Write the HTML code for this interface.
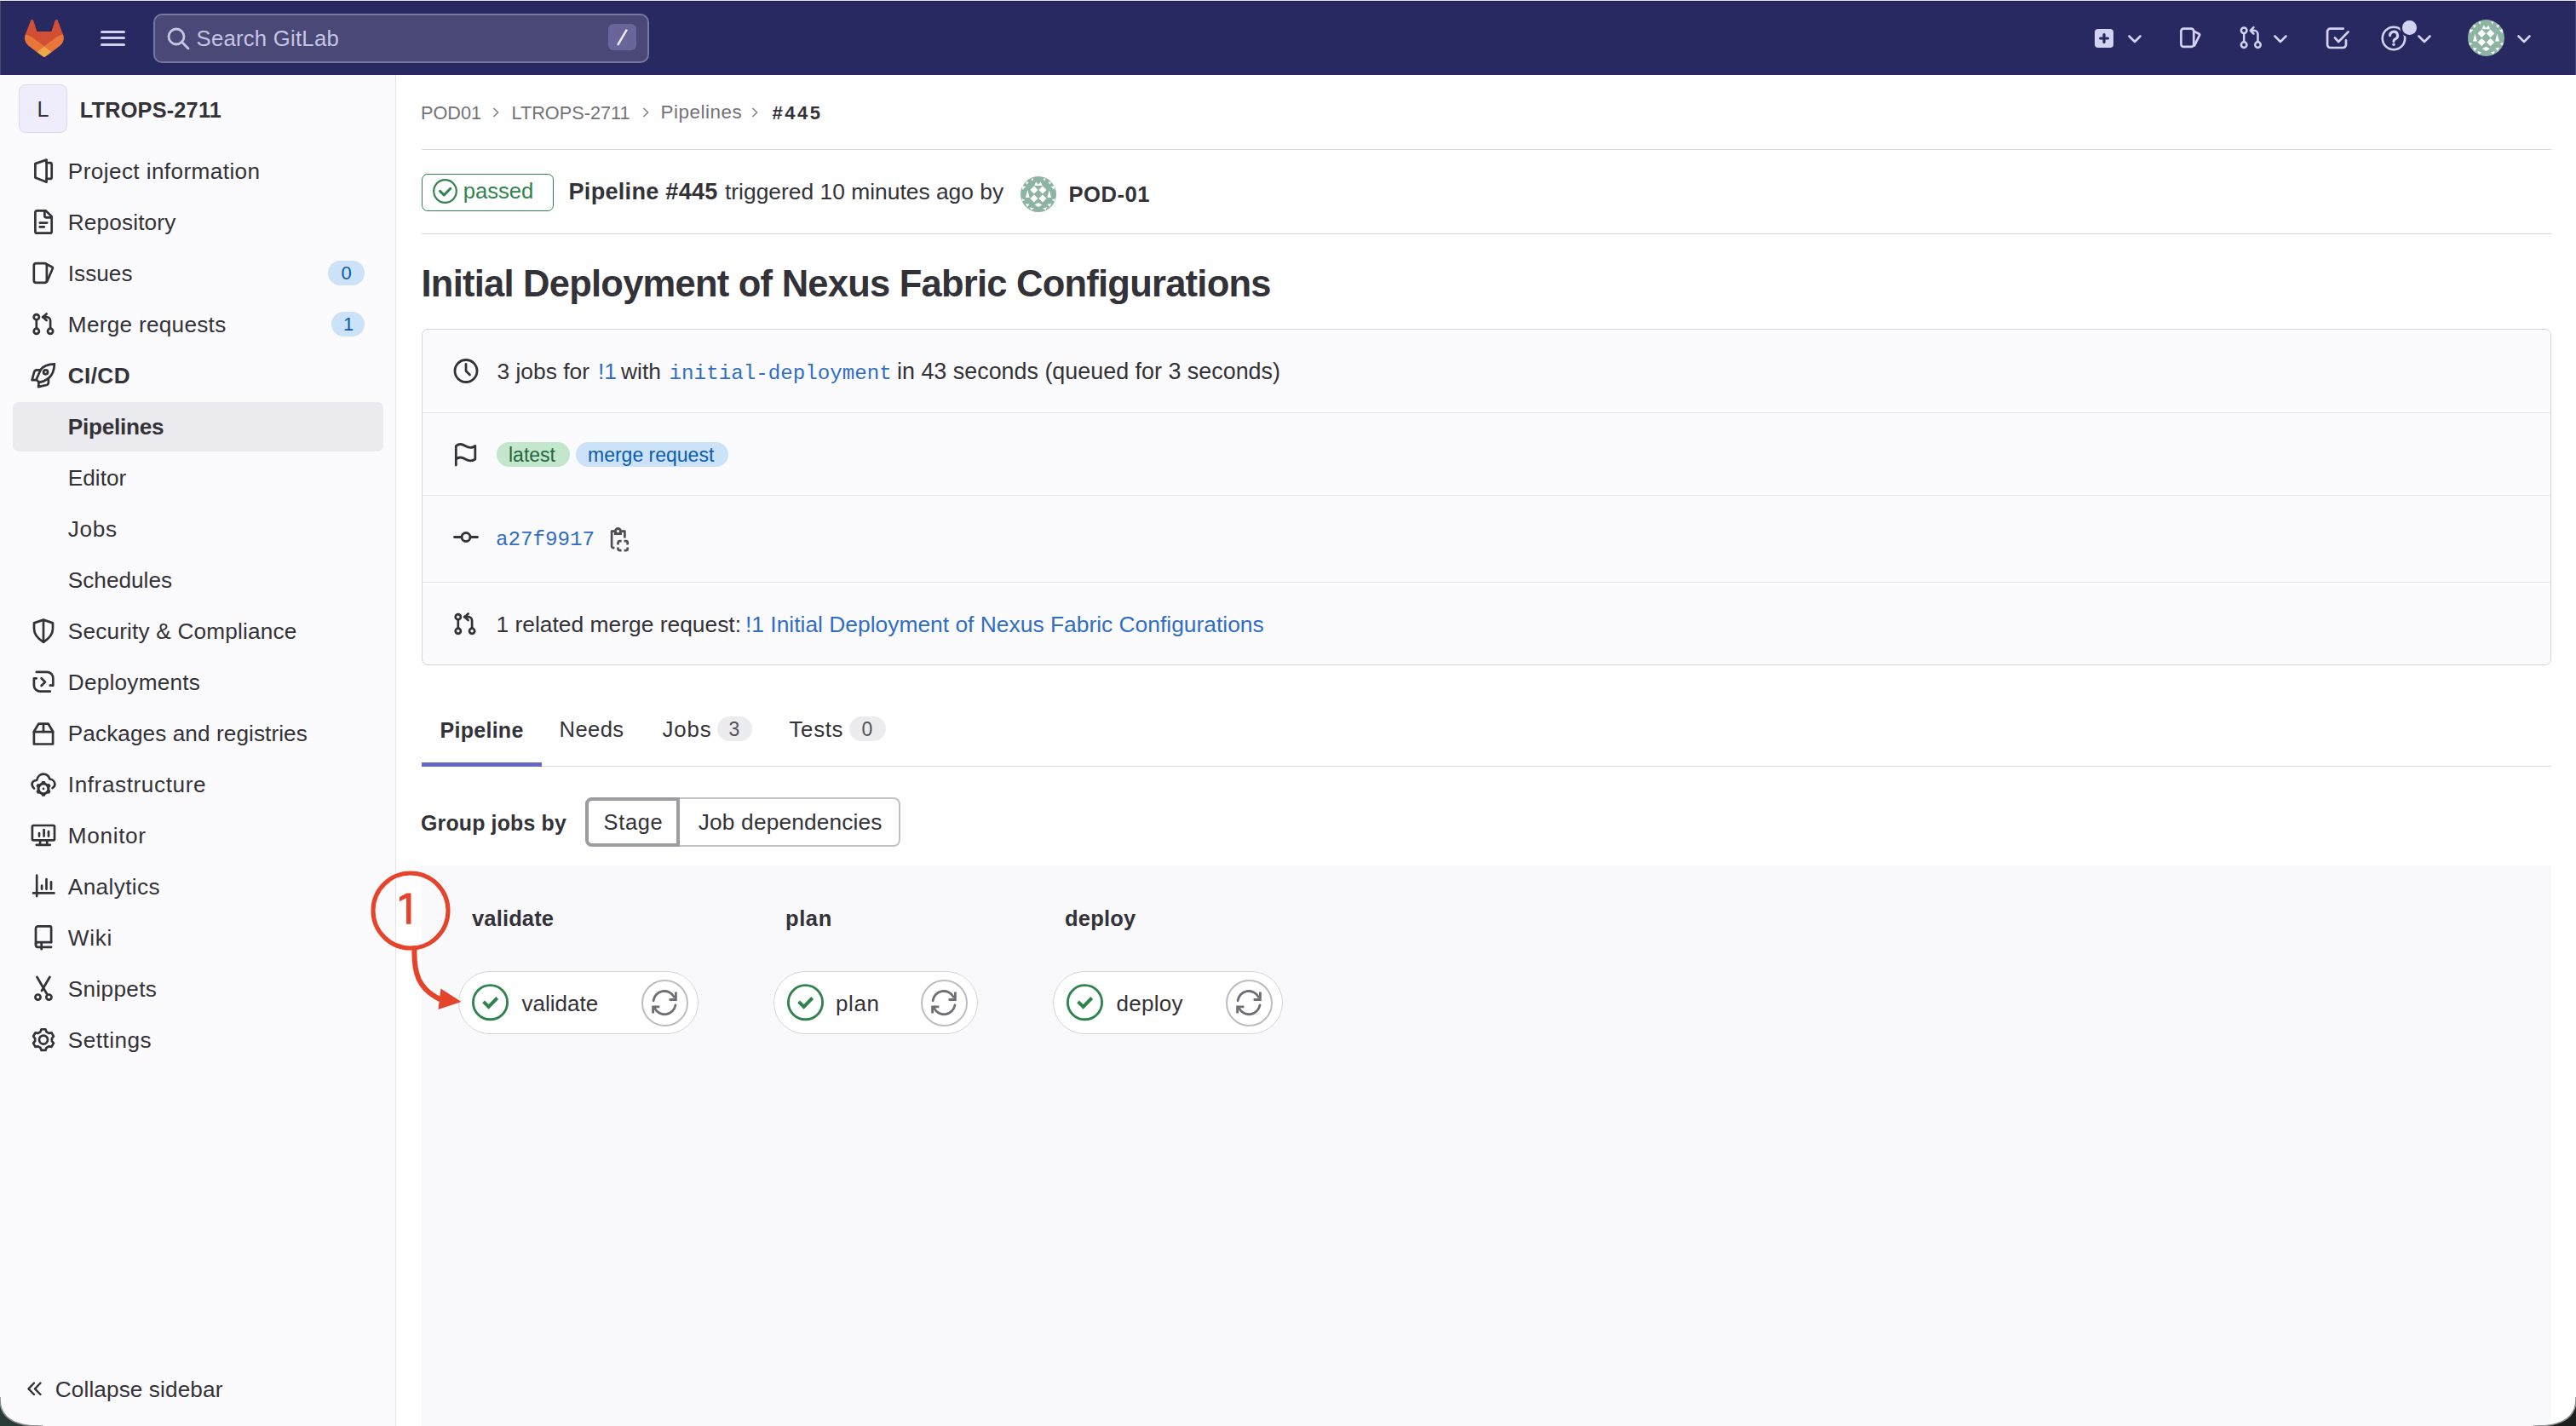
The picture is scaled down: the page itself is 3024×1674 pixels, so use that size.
<!DOCTYPE html><html><head><meta charset="utf-8"><title>Pipeline #445</title>
<style>
html,body{margin:0;padding:0;width:3024px;height:1674px;overflow:hidden;background:#fff;}
body{position:relative;font-family:"Liberation Sans",sans-serif;}
.t{position:absolute;white-space:pre;}
.r{position:absolute;box-sizing:border-box;}
svg.r{overflow:visible}
</style></head><body>
<div class="r" style="left:0px;top:0px;width:3024px;height:88px;background:#292961;"></div>
<div class="r" style="left:0px;top:0px;width:3024px;height:1px;background:#e6e6e8;"></div>
<div class="r" style="left:0px;top:1px;width:3024px;height:1px;background:#1d1d50;"></div>
<div class="r" style="left:0px;top:1px;width:1px;height:87px;background:#4a4a78;"></div>
<div class="r" style="left:3023px;top:1px;width:1px;height:87px;background:#4a4a78;"></div>
<svg class="r" style="left:29px;top:23px;" width="46" height="44" viewBox="0 0 25 24" fill="none">
<path d="m24.507 9.5-.034-.09L21.082.562a.896.896 0 0 0-1.694.091l-2.29 7.01H7.825L5.535.653a.898.898 0 0 0-1.694-.09L.451 9.411.416 9.5a6.297 6.297 0 0 0 2.09 7.278l.012.01.03.022 5.16 3.867 2.56 1.935 1.554 1.176a1.051 1.051 0 0 0 1.268 0l1.555-1.176 2.56-1.935 5.197-3.89.014-.01A6.297 6.297 0 0 0 24.507 9.5Z" fill="#d24f33"/>
<path d="m24.507 9.5-.034-.09a11.44 11.44 0 0 0-4.56 2.051l-7.447 5.632 4.742 3.584 5.197-3.89.014-.01A6.297 6.297 0 0 0 24.507 9.5Z" fill="#e8753a"/>
<path d="m7.707 20.677 2.56 1.935 1.555 1.176a1.051 1.051 0 0 0 1.268 0l1.555-1.176 2.56-1.935-4.743-3.584-4.755 3.584Z" fill="#eea846"/>
<path d="M5.01 11.461a11.43 11.43 0 0 0-4.56-2.05L.416 9.5a6.297 6.297 0 0 0 2.09 7.278l.012.01.03.022 5.16 3.867 4.745-3.584-7.444-5.632Z" fill="#e8753a"/>
</svg>
<div class="r" style="left:118px;top:35.5px;width:29px;height:3px;background:#d2d2f1;border-radius:2px;"></div>
<div class="r" style="left:118px;top:43.2px;width:29px;height:3px;background:#d2d2f1;border-radius:2px;"></div>
<div class="r" style="left:118px;top:51px;width:29px;height:3px;background:#d2d2f1;border-radius:2px;"></div>
<div class="r" style="left:180px;top:16px;width:582px;height:58px;background:#4a4877;border:2px solid #78769f;border-radius:10px;"></div>
<svg class="r" style="left:196px;top:32px;" width="27" height="26" viewBox="0 0 27 26" fill="none"><circle cx="11" cy="11" r="9" stroke="#c6c5e3" stroke-width="2.8"/><path d="M17.6 17.6 25 25" stroke="#c6c5e3" stroke-width="2.8" stroke-linecap="round"/></svg>
<div class="t" style="left:230.50px;top:32.94px;font-size:25.7px;line-height:25.7px;font-weight:400;color:#c6c5e2;font-family:'Liberation Sans', sans-serif;letter-spacing:0.25px;">Search GitLab</div>
<div class="r" style="left:714px;top:28px;width:33px;height:31px;background:#67659a;border-radius:6px;"></div>
<svg class="r" style="left:714px;top:28px;" width="33" height="31" viewBox="0 0 33 31" fill="none"><path d="M21.9 6.6 11.1 25" stroke="#eceaf8" stroke-width="2.5"/></svg>
<div class="r" style="left:2458.5px;top:34px;width:22px;height:22px;background:#d2d2f1;border-radius:4px;"></div>
<svg class="r" style="left:2458.5px;top:34px;" width="22" height="22" viewBox="0 0 22 22" fill="none"><path d="M11 6.6v8.8M6.6 11h8.8" stroke="#292961" stroke-width="3.2" stroke-linecap="round"/></svg>
<svg class="r" style="left:2498px;top:41px;" width="16" height="10" viewBox="0 0 16 10" fill="none"><path d="M1.5 1.5 8 8l6.5-6.5" stroke="#d2d2f1" stroke-width="2.6" stroke-linecap="round" stroke-linejoin="round"/></svg>
<svg class="r" style="left:2558px;top:32px;" width="27" height="25" viewBox="0 0 27 25" fill="none"><rect x="2.4" y="1.6" width="14.9" height="21.3" rx="3" stroke="#d2d2f1" stroke-width="2.7"/><path d="M17.3 4.6 23.4 7.7a1.4 1.4 0 0 1 .6 1.8L17.6 22.4" stroke="#d2d2f1" stroke-width="2.7" stroke-linejoin="round"/></svg>
<svg class="r" style="left:2629px;top:31px;" width="27" height="26" viewBox="0 0 27 26" fill="none"><circle cx="5.2" cy="4.8" r="3.3" stroke="#d2d2f1" stroke-width="2.5"/>
<circle cx="5.2" cy="21.6" r="3.3" stroke="#d2d2f1" stroke-width="2.5"/><circle cx="21.5" cy="21.6" r="3.3" stroke="#d2d2f1" stroke-width="2.5"/>
<path d="M5.2 8.1v10.2M21.5 18.3V9.3a4.5 4.5 0 0 0-4.5-4.5h-3.5" stroke="#d2d2f1" stroke-width="2.5"/>
<path d="M16.5 1.2 12.8 4.8l3.7 3.7" stroke="#d2d2f1" stroke-width="2.5" stroke-linecap="round" stroke-linejoin="round"/></svg>
<svg class="r" style="left:2669px;top:41px;" width="16" height="10" viewBox="0 0 16 10" fill="none"><path d="M1.5 1.5 8 8l6.5-6.5" stroke="#d2d2f1" stroke-width="2.6" stroke-linecap="round" stroke-linejoin="round"/></svg>
<svg class="r" style="left:2729.5px;top:31.5px;" width="28" height="26" viewBox="0 0 28 26" fill="none"><path d="M20.8 1.6H5.6A3.5 3.5 0 0 0 2.1 5.1v15.4a3.5 3.5 0 0 0 3.5 3.5h14.9a3.5 3.5 0 0 0 3.5-3.5v-5.2" stroke="#d2d2f1" stroke-width="2.7" stroke-linecap="round"/><path d="M10.9 12.4l4.35 4.6L26.6 5.4" stroke="#d2d2f1" stroke-width="2.7" stroke-linecap="round" stroke-linejoin="round"/></svg>
<svg class="r" style="left:2794.5px;top:29.5px;" width="30" height="30" viewBox="0 0 30 30" fill="none"><circle cx="15" cy="15" r="13.2" stroke="#d2d2f1" stroke-width="2.6"/>
<path d="M10.6 11.6a4.5 4.5 0 1 1 6.6 4c-1.3.7-2.2 1.3-2.2 2.7v.3" stroke="#d2d2f1" stroke-width="3.1" stroke-linecap="round"/>
<circle cx="15" cy="22.3" r="1.7" fill="#d2d2f1"/></svg>
<div class="r" style="left:2820px;top:24px;width:16.5px;height:16.5px;background:#d2d2f1;border-radius:50%;box-shadow:0 0 0 2.5px #292961;"></div>
<svg class="r" style="left:2838px;top:41px;" width="16" height="10" viewBox="0 0 16 10" fill="none"><path d="M1.5 1.5 8 8l6.5-6.5" stroke="#d2d2f1" stroke-width="2.6" stroke-linecap="round" stroke-linejoin="round"/></svg>
<svg class="r" style="left:2897px;top:22.5px;" width="43" height="43" viewBox="0 0 43 43" fill="none"><defs><clipPath id="avc"><circle cx="21.5" cy="21.5" r="21.5"/></clipPath></defs>
<g clip-path="url(#avc)"><rect width="43" height="43" fill="#8db3a3"/>
<g fill="#ffffff">
<path d="M16.3 11.6 21 16.3 16.3 21 11.6 16.3Z"/><path d="M26.6 11.6 31.3 16.3 26.6 21 21.9 16.3Z"/>
<path d="M16.3 21.9 21 26.6 16.3 31.3 11.6 26.6Z"/><path d="M26.6 21.9 31.3 26.6 26.6 31.3 21.9 26.6Z"/>
<path d="M16.6 11.2 18.6 6.6 21.4 10 24.3 6.6 26.3 11.2Z"/>
<path d="M16.7 34.3 21.4 31.8 26.1 34.3 21.4 36.9Z"/>
<path d="M8.5 16.4 10.9 25.6H6Z"/><path d="M34.5 16.4 37 25.6H32.1Z"/>
<path d="M12.7 2.5h3l-1.5 3.4Z"/><path d="M30.3 2.5h-3l1.5 3.4Z"/>
<path d="M5.9 6.3 10 6.8 7.5 10Z"/><path d="M37.1 6.3 33 6.8 35.5 10Z"/>
<path d="M1.5 10.8 6.3 12.5 2.5 16.1Z"/><path d="M41.5 10.8 36.7 12.5 40.5 16.1Z"/>
<path d="M1.7 26.7 5.5 28.5 1.7 30.5Z"/><path d="M41.3 26.7 37.5 28.5 41.3 30.5Z"/>
<path d="M5.9 32.8 10.8 33.5 8 36.9Z"/><path d="M37.1 32.8 32.2 33.5 35 36.9Z"/>
<path d="M11.2 37 16.1 38.5 13 41Z"/><path d="M31.8 37 26.9 38.5 30 41Z"/>
</g></g></svg>
<svg class="r" style="left:2955px;top:41px;" width="16" height="10" viewBox="0 0 16 10" fill="none"><path d="M1.5 1.5 8 8l6.5-6.5" stroke="#d2d2f1" stroke-width="2.6" stroke-linecap="round" stroke-linejoin="round"/></svg>
<div class="r" style="left:0px;top:88px;width:465px;height:1586px;background:#fbfafd;border-right:1px solid #e2e2e8;"></div>
<div class="r" style="left:22px;top:99px;width:57px;height:57px;background:#efedfb;border:1.5px solid #dcdaee;border-radius:8px;"></div>
<div class="t" style="left:43.50px;top:116.34px;font-size:25px;line-height:25px;font-weight:400;color:#333238;font-family:'Liberation Sans', sans-serif;">L</div>
<div class="t" style="left:93.80px;top:117.08px;font-size:25.3px;line-height:25.3px;font-weight:700;color:#333238;font-family:'Liberation Sans', sans-serif;letter-spacing:0.2px;">LTROPS-2711</div>
<div class="r" style="left:15px;top:472px;width:435px;height:58px;background:#ebeaee;border-radius:7px;"></div>
<div class="t" style="left:79.80px;top:187.62px;font-size:26.2px;line-height:26.2px;font-weight:400;color:#333238;font-family:'Liberation Sans', sans-serif;letter-spacing:0.39px;">Project information</div>
<svg class="r" style="left:34.5px;top:185px;" width="32" height="32" viewBox="0 0 32 32" fill="none"><path d="M6.4 7.1 19.6 2.6v26.1L6.4 23.6Z" stroke="#333238" stroke-width="2.7" stroke-linecap="round" stroke-linejoin="round"/><path d="M19.6 6.1h4.1a2 2 0 0 1 2 2v14.8a2 2 0 0 1-2 2h-4.1" stroke="#333238" stroke-width="2.7" stroke-linecap="round" stroke-linejoin="round"/></svg>
<div class="t" style="left:79.80px;top:247.62px;font-size:26.2px;line-height:26.2px;font-weight:400;color:#333238;font-family:'Liberation Sans', sans-serif;letter-spacing:0.14px;">Repository</div>
<svg class="r" style="left:34.5px;top:245px;" width="32" height="32" viewBox="0 0 32 32" fill="none"><path d="M18.8 2.4H8.4a2 2 0 0 0-2 2v22.3a2 2 0 0 0 2 2h15.3a2 2 0 0 0 2-2V9.2Z" stroke="#333238" stroke-width="2.7" stroke-linecap="round" stroke-linejoin="round"/><path d="M17.4 2.8v5.6a2 2 0 0 0 2 2h5.8" stroke="#333238" stroke-width="2.7" stroke-linecap="round" stroke-linejoin="round"/><path d="M11.8 16.6h8.4M11.8 21.4h5" stroke="#333238" stroke-width="2.7" stroke-linecap="round" stroke-linejoin="round"/></svg>
<div class="t" style="left:79.80px;top:307.62px;font-size:26.2px;line-height:26.2px;font-weight:400;color:#333238;font-family:'Liberation Sans', sans-serif;letter-spacing:0px;">Issues</div>
<svg class="r" style="left:34.5px;top:305px;" width="32" height="32" viewBox="0 0 32 32" fill="none"><rect x="4.8" y="4.1" width="15.1" height="22.7" rx="2.6" stroke="#333238" stroke-width="2.7" stroke-linecap="round" stroke-linejoin="round"/><path d="M19.9 5.2l6.2 3.3a1.5 1.5 0 0 1 .6 2L20.3 25.3" stroke="#333238" stroke-width="2.7" stroke-linecap="round" stroke-linejoin="round"/></svg>
<div class="t" style="left:79.80px;top:367.62px;font-size:26.2px;line-height:26.2px;font-weight:400;color:#333238;font-family:'Liberation Sans', sans-serif;letter-spacing:0.27px;">Merge requests</div>
<svg class="r" style="left:34.5px;top:365px;" width="32" height="32" viewBox="0 0 32 32" fill="none"><circle cx="7.8" cy="7.2" r="3.1" stroke="#333238" stroke-width="2.7" stroke-linecap="round" stroke-linejoin="round"/><circle cx="7.8" cy="23.8" r="3.1" stroke="#333238" stroke-width="2.7" stroke-linecap="round" stroke-linejoin="round"/><circle cx="24.1" cy="23.8" r="3.1" stroke="#333238" stroke-width="2.7" stroke-linecap="round" stroke-linejoin="round"/><path d="M7.8 10.3v10.4M24.1 20.7V11.6a4.4 4.4 0 0 0-4.4-4.4h-4.6" stroke="#333238" stroke-width="2.7" stroke-linecap="round" stroke-linejoin="round"/><path d="M19.6 3.4 15.4 7.2l4.2 3.9" stroke="#333238" stroke-width="2.7" stroke-linecap="round" stroke-linejoin="round"/></svg>
<div class="t" style="left:79.80px;top:427.62px;font-size:26.2px;line-height:26.2px;font-weight:700;color:#333238;font-family:'Liberation Sans', sans-serif;letter-spacing:0.37px;">CI/CD</div>
<svg class="r" style="left:34.5px;top:425px;" width="32" height="32" viewBox="0 0 32 32" fill="none"><path d="M12.9 8.7C15.5 5.2 20.5 2.7 28.9 2.4 28.6 10.5 25.8 16 21.9 19.1 18.5 21.8 14.5 23.3 10.9 23.9L7.6 20.5Z" stroke="#333238" stroke-width="2.7" stroke-linecap="round" stroke-linejoin="round"/><path d="M12.3 9.4H8.3A3.4 3.4 0 0 0 5 12.1L2.6 21.1H7.2M21.9 19.1v4.9a3.2 3.2 0 0 1-2.4 3L10.1 29.1l.5-4.9" stroke="#333238" stroke-width="2.7" stroke-linecap="round" stroke-linejoin="round"/><circle cx="18.6" cy="11.8" r="2.5" stroke="#333238" stroke-width="2.7" stroke-linecap="round" stroke-linejoin="round"/></svg>
<div class="t" style="left:79.80px;top:487.62px;font-size:26.2px;line-height:26.2px;font-weight:700;color:#333238;font-family:'Liberation Sans', sans-serif;letter-spacing:-0.27px;">Pipelines</div>
<div class="t" style="left:79.80px;top:547.62px;font-size:26.2px;line-height:26.2px;font-weight:400;color:#333238;font-family:'Liberation Sans', sans-serif;letter-spacing:0px;">Editor</div>
<div class="t" style="left:79.80px;top:607.62px;font-size:26.2px;line-height:26.2px;font-weight:400;color:#333238;font-family:'Liberation Sans', sans-serif;letter-spacing:0.7px;">Jobs</div>
<div class="t" style="left:79.80px;top:667.62px;font-size:26.2px;line-height:26.2px;font-weight:400;color:#333238;font-family:'Liberation Sans', sans-serif;letter-spacing:0px;">Schedules</div>
<div class="t" style="left:79.80px;top:727.62px;font-size:26.2px;line-height:26.2px;font-weight:400;color:#333238;font-family:'Liberation Sans', sans-serif;letter-spacing:0.18px;">Security &amp; Compliance</div>
<svg class="r" style="left:34.5px;top:725px;" width="32" height="32" viewBox="0 0 32 32" fill="none"><path d="M16 2.6 5 6.4v6.6c0 6.4 4.4 11.6 11 15.8 6.6-4.2 11-9.4 11-15.8V6.4Z" stroke="#333238" stroke-width="2.7" stroke-linecap="round" stroke-linejoin="round"/><path d="M16 3v25.5" stroke="#333238" stroke-width="2.7" stroke-linecap="round" stroke-linejoin="round"/></svg>
<div class="t" style="left:79.80px;top:787.62px;font-size:26.2px;line-height:26.2px;font-weight:400;color:#333238;font-family:'Liberation Sans', sans-serif;letter-spacing:0.23px;">Deployments</div>
<svg class="r" style="left:34.5px;top:785px;" width="32" height="32" viewBox="0 0 32 32" fill="none"><path d="M7.8 3.9H20.2A7.1 7.1 0 0 1 27.3 11V19.7H23.8" stroke="#333238" stroke-width="2.7" stroke-linecap="round" stroke-linejoin="round"/><path d="M7.7 11.3H4.9V19.4A7.3 7.3 0 0 0 12.2 26.7H23.8" stroke="#333238" stroke-width="2.7" stroke-linecap="round" stroke-linejoin="round"/><path d="M13.6 11.3l4.4 4.35-4.4 4.35" stroke="#333238" stroke-width="2.7" stroke-linecap="round" stroke-linejoin="round"/></svg>
<div class="t" style="left:79.80px;top:847.62px;font-size:26.2px;line-height:26.2px;font-weight:400;color:#333238;font-family:'Liberation Sans', sans-serif;letter-spacing:0.07px;">Packages and registries</div>
<svg class="r" style="left:34.5px;top:845px;" width="32" height="32" viewBox="0 0 32 32" fill="none"><path d="M4.9 13.8 10.3 4.7h11.4l5.4 9.1v14.7H4.9Z" stroke="#333238" stroke-width="2.7" stroke-linecap="round" stroke-linejoin="round"/><path d="M4.9 14.2h22.2M16 5v9" stroke="#333238" stroke-width="2.7" stroke-linecap="round" stroke-linejoin="round"/></svg>
<div class="t" style="left:79.80px;top:907.62px;font-size:26.2px;line-height:26.2px;font-weight:400;color:#333238;font-family:'Liberation Sans', sans-serif;letter-spacing:0.57px;">Infrastructure</div>
<svg class="r" style="left:34.5px;top:905px;" width="32" height="32" viewBox="0 0 32 32" fill="none"><path d="M5 20.5C2.3 18.5 1.5 14 4.5 12 5.5 11.3 7 11 8.1 11 9 6.5 12.3 3.7 16 3.7 19.4 3.7 22.3 6.2 23.4 9.5 26.8 10 29.4 12.5 29.4 15.8 29.4 17.6 28.3 19.1 26.6 20.1" stroke="#333238" stroke-width="2.7" stroke-linecap="round" stroke-linejoin="round"/><path fill-rule="evenodd" fill="#333238" d="M18.44 13.81 L17.58 11.94 L14.42 11.94 L13.56 13.81 L11.08 15.24 L9.03 15.05 L7.45 17.79 L8.64 19.47 L8.64 22.33 L7.45 24.01 L9.03 26.75 L11.08 26.56 L13.56 27.99 L14.42 29.86 L17.58 29.86 L18.44 27.99 L20.92 26.56 L22.97 26.75 L24.55 24.01 L23.36 22.33 L23.36 19.47 L24.55 17.79 L22.97 15.05 L20.92 15.24Z M20.35 20.9a4.35 4.35 0 1 0-8.7 0 4.35 4.35 0 1 0 8.7 0Z"/><circle cx="16" cy="20.9" r="1.3" fill="#333238"/></svg>
<div class="t" style="left:79.80px;top:967.62px;font-size:26.2px;line-height:26.2px;font-weight:400;color:#333238;font-family:'Liberation Sans', sans-serif;letter-spacing:0.65px;">Monitor</div>
<svg class="r" style="left:34.5px;top:965px;" width="32" height="32" viewBox="0 0 32 32" fill="none"><rect x="2.9" y="4" width="26.1" height="17.4" rx="1.4" stroke="#333238" stroke-width="2.7" stroke-linecap="round" stroke-linejoin="round"/><path d="M12.1 21.4v5.4M20.2 21.4v5.4M7.8 26.8h16M11 13v3.6M16.6 9v7.6M22 11v5.6" stroke="#333238" stroke-width="2.7" stroke-linecap="round" stroke-linejoin="round"/></svg>
<div class="t" style="left:79.80px;top:1027.62px;font-size:26.2px;line-height:26.2px;font-weight:400;color:#333238;font-family:'Liberation Sans', sans-serif;letter-spacing:0.38px;">Analytics</div>
<svg class="r" style="left:34.5px;top:1025px;" width="32" height="32" viewBox="0 0 32 32" fill="none"><path d="M8.2 2.7v24.4M4 23.4h24.4M14.1 14.5v4.2M19.5 7v11.7M25 10.3v8.4" stroke="#333238" stroke-width="2.7" stroke-linecap="round" stroke-linejoin="round"/></svg>
<div class="t" style="left:79.80px;top:1087.62px;font-size:26.2px;line-height:26.2px;font-weight:400;color:#333238;font-family:'Liberation Sans', sans-serif;letter-spacing:0.7px;">Wiki</div>
<svg class="r" style="left:34.5px;top:1085px;" width="32" height="32" viewBox="0 0 32 32" fill="none"><path d="M25.1 21.1V3.6a1.2 1.2 0 0 0-1.2-1.2H9.6A2.6 2.6 0 0 0 7 5V24.2a2.6 2.6 0 0 0 2.6 2.6H25.1" stroke="#333238" stroke-width="2.7" stroke-linecap="round" stroke-linejoin="round"/><path d="M7 23.7a2.6 2.6 0 0 1 2.6-2.6H25.1M13.7 21.9v7.3" stroke="#333238" stroke-width="2.7" stroke-linecap="round" stroke-linejoin="round"/></svg>
<div class="t" style="left:79.80px;top:1147.62px;font-size:26.2px;line-height:26.2px;font-weight:400;color:#333238;font-family:'Liberation Sans', sans-serif;letter-spacing:0.3px;">Snippets</div>
<svg class="r" style="left:34.5px;top:1145px;" width="32" height="32" viewBox="0 0 32 32" fill="none"><path d="M8.5 2 19.9 21.5M23.4 2 14 18" stroke="#333238" stroke-width="2.7" stroke-linecap="round" stroke-linejoin="round"/><circle cx="9.5" cy="25.6" r="3.1" stroke="#333238" stroke-width="2.7" stroke-linecap="round" stroke-linejoin="round"/><circle cx="22.4" cy="25.6" r="3.1" stroke="#333238" stroke-width="2.7" stroke-linecap="round" stroke-linejoin="round"/></svg>
<div class="t" style="left:79.80px;top:1207.62px;font-size:26.2px;line-height:26.2px;font-weight:400;color:#333238;font-family:'Liberation Sans', sans-serif;letter-spacing:0.45px;">Settings</div>
<svg class="r" style="left:34.5px;top:1205px;" width="32" height="32" viewBox="0 0 32 32" fill="none"><path d="M19.58 6.26 L18.40 3.23 L13.60 3.23 L12.42 6.26 L9.71 7.83 L6.49 7.33 L4.09 11.50 L6.12 14.04 L6.12 17.16 L4.09 19.70 L6.49 23.87 L9.71 23.37 L12.42 24.94 L13.60 27.97 L18.40 27.97 L19.58 24.94 L22.29 23.37 L25.51 23.87 L27.91 19.70 L25.88 17.16 L25.88 14.04 L27.91 11.50 L25.51 7.33 L22.29 7.83Z" stroke="#333238" stroke-width="2.7" stroke-linecap="round" stroke-linejoin="round"/><circle cx="16" cy="15.6" r="5" stroke="#333238" stroke-width="2.7" stroke-linecap="round" stroke-linejoin="round"/></svg>
<div class="r" style="left:385px;top:306px;width:43px;height:29px;background:#cbe2f9;border-radius:15px;"></div>
<div class="t" style="left:400.50px;top:309.88px;font-size:22px;line-height:22px;font-weight:400;color:#0b5cad;font-family:'Liberation Sans', sans-serif;">0</div>
<div class="r" style="left:389px;top:366px;width:39px;height:29px;background:#cbe2f9;border-radius:15px;"></div>
<div class="t" style="left:403.00px;top:369.88px;font-size:22px;line-height:22px;font-weight:400;color:#0b5cad;font-family:'Liberation Sans', sans-serif;">1</div>
<svg class="r" style="left:31px;top:1621px;" width="19" height="19" viewBox="0 0 19 19" fill="none"><path d="M9 2.5 2.5 9.3 9 16M16.5 2.5 10 9.3l6.5 6.7" stroke="#333238" stroke-width="2.4" stroke-linecap="round" stroke-linejoin="round"/></svg>
<div class="t" style="left:64.80px;top:1618.32px;font-size:26.2px;line-height:26.2px;font-weight:400;color:#333238;font-family:'Liberation Sans', sans-serif;letter-spacing:0.1px;">Collapse sidebar</div>
<div class="t" style="left:494.00px;top:122.03px;font-size:21.7px;line-height:21.7px;font-weight:400;color:#737278;font-family:'Liberation Sans', sans-serif;">POD01</div>
<div class="t" style="left:600.50px;top:122.03px;font-size:21.7px;line-height:21.7px;font-weight:400;color:#737278;font-family:'Liberation Sans', sans-serif;">LTROPS-2711</div>
<div class="t" style="left:775.50px;top:121.35px;font-size:22.5px;line-height:22.5px;font-weight:400;color:#737278;font-family:'Liberation Sans', sans-serif;letter-spacing:0.5px;">Pipelines</div>
<div class="t" style="left:906.50px;top:121.78px;font-size:22px;line-height:22px;font-weight:700;color:#333238;font-family:'Liberation Sans', sans-serif;letter-spacing:2.5px;">#445</div>
<svg class="r" style="left:578px;top:124px;" width="9" height="16" viewBox="0 0 9 16" fill="none"><path d="M2 3.5 6.6 8 2 12.5" stroke="#7f7e84" stroke-width="1.6" stroke-linecap="round" stroke-linejoin="round"/></svg>
<svg class="r" style="left:754px;top:124px;" width="9" height="16" viewBox="0 0 9 16" fill="none"><path d="M2 3.5 6.6 8 2 12.5" stroke="#7f7e84" stroke-width="1.6" stroke-linecap="round" stroke-linejoin="round"/></svg>
<svg class="r" style="left:882px;top:124px;" width="9" height="16" viewBox="0 0 9 16" fill="none"><path d="M2 3.5 6.6 8 2 12.5" stroke="#7f7e84" stroke-width="1.6" stroke-linecap="round" stroke-linejoin="round"/></svg>
<div class="r" style="left:495px;top:175px;width:2500px;height:1px;background:#d9d9dd;"></div>
<div class="r" style="left:495px;top:204px;width:155px;height:44px;border:1.5px solid #30834d;border-radius:7px;"></div>
<svg class="r" style="left:508px;top:210px;" width="29" height="29" viewBox="0 0 29 29" fill="none"><circle cx="14.5" cy="14.5" r="13.3" stroke="#30834d" stroke-width="2.2"/><path d="M8.6 14.4l4.6 4.6 7.6-7.7" stroke="#30834d" stroke-width="3" stroke-linecap="round" stroke-linejoin="round"/></svg>
<div class="t" style="left:543.80px;top:211.93px;font-size:25.6px;line-height:25.6px;font-weight:400;color:#30834d;font-family:'Liberation Sans', sans-serif;">passed</div>
<div class="t" style="left:667.50px;top:211.36px;font-size:27.1px;line-height:27.1px;font-weight:700;color:#333238;font-family:'Liberation Sans', sans-serif;letter-spacing:0.27px;">Pipeline #445</div>
<div class="t" style="left:851.00px;top:211.95px;font-size:26.4px;line-height:26.4px;font-weight:400;color:#333238;font-family:'Liberation Sans', sans-serif;">triggered 10 minutes ago by</div>
<svg class="r" style="left:1197.5px;top:206.5px;" width="42" height="42" viewBox="0 0 43 43" fill="none"><defs><clipPath id="avc"><circle cx="21.5" cy="21.5" r="21.5"/></clipPath></defs>
<g clip-path="url(#avc)"><rect width="43" height="43" fill="#8db3a3"/>
<g fill="#ffffff">
<path d="M16.3 11.6 21 16.3 16.3 21 11.6 16.3Z"/><path d="M26.6 11.6 31.3 16.3 26.6 21 21.9 16.3Z"/>
<path d="M16.3 21.9 21 26.6 16.3 31.3 11.6 26.6Z"/><path d="M26.6 21.9 31.3 26.6 26.6 31.3 21.9 26.6Z"/>
<path d="M16.6 11.2 18.6 6.6 21.4 10 24.3 6.6 26.3 11.2Z"/>
<path d="M16.7 34.3 21.4 31.8 26.1 34.3 21.4 36.9Z"/>
<path d="M8.5 16.4 10.9 25.6H6Z"/><path d="M34.5 16.4 37 25.6H32.1Z"/>
<path d="M12.7 2.5h3l-1.5 3.4Z"/><path d="M30.3 2.5h-3l1.5 3.4Z"/>
<path d="M5.9 6.3 10 6.8 7.5 10Z"/><path d="M37.1 6.3 33 6.8 35.5 10Z"/>
<path d="M1.5 10.8 6.3 12.5 2.5 16.1Z"/><path d="M41.5 10.8 36.7 12.5 40.5 16.1Z"/>
<path d="M1.7 26.7 5.5 28.5 1.7 30.5Z"/><path d="M41.3 26.7 37.5 28.5 41.3 30.5Z"/>
<path d="M5.9 32.8 10.8 33.5 8 36.9Z"/><path d="M37.1 32.8 32.2 33.5 35 36.9Z"/>
<path d="M11.2 37 16.1 38.5 13 41Z"/><path d="M31.8 37 26.9 38.5 30 41Z"/>
</g></g></svg>
<div class="t" style="left:1254.50px;top:215.93px;font-size:25.6px;line-height:25.6px;font-weight:700;color:#333238;font-family:'Liberation Sans', sans-serif;letter-spacing:0.5px;">POD-01</div>
<div class="r" style="left:495px;top:274px;width:2500px;height:1px;background:#d9d9dd;"></div>
<div class="t" style="left:494.50px;top:311.88px;font-size:43.5px;line-height:43.5px;font-weight:700;color:#333238;font-family:'Liberation Sans', sans-serif;letter-spacing:-0.76px;">Initial Deployment of Nexus Fabric Configurations</div>
<div class="r" style="left:495px;top:386px;width:2500px;height:395px;background:#fbfafc;border:1px solid #d6d6da;border-radius:7px;"></div>
<div class="r" style="left:496px;top:484px;width:2498px;height:1px;background:#e6e6ea;"></div>
<div class="r" style="left:496px;top:581px;width:2498px;height:1px;background:#e6e6ea;"></div>
<div class="r" style="left:496px;top:683px;width:2498px;height:1px;background:#e6e6ea;"></div>
<svg class="r" style="left:531.5px;top:421px;" width="30" height="30" viewBox="0 0 30 30" fill="none"><circle cx="15" cy="14.5" r="13" stroke="#333238" stroke-width="2.8"/><path d="M15 6.5v8l4.5 4.5" stroke="#333238" stroke-width="2.8" stroke-linecap="round" stroke-linejoin="round"/></svg>
<div class="t" style="left:583.50px;top:423.05px;font-size:26.4px;line-height:26.4px;font-weight:400;color:#333238;font-family:'Liberation Sans', sans-serif;">3 jobs for </div>
<div class="t" style="left:702.00px;top:423.05px;font-size:26.4px;line-height:26.4px;font-weight:400;color:#2f6ec4;font-family:'Liberation Sans', sans-serif;">!1</div>
<div class="t" style="left:729.00px;top:423.05px;font-size:26.4px;line-height:26.4px;font-weight:400;color:#333238;font-family:'Liberation Sans', sans-serif;">with</div>
<div class="t" style="left:785.60px;top:426.86px;font-size:24.2px;line-height:24.2px;font-weight:400;color:#2f6ec4;font-family:'Liberation Mono', monospace;">initial-deployment</div>
<div class="t" style="left:1053.00px;top:422.63px;font-size:26.9px;line-height:26.9px;font-weight:400;color:#333238;font-family:'Liberation Sans', sans-serif;">in 43 seconds (queued for 3 seconds)</div>
<svg class="r" style="left:532px;top:519px;" width="30" height="30" viewBox="0 0 30 30" fill="none"><path d="M3.3 27V4.5c3-2.5 7-2.5 11 0s8 2.5 11.5 0v15.5c-3.5 2.5-7.5 2.5-11.5 0s-8-2.5-11 0" stroke="#333238" stroke-width="2.8" stroke-linecap="round" stroke-linejoin="round"/></svg>
<div class="r" style="left:583px;top:519px;width:86px;height:29px;background:#c3e6cd;border-radius:15px;"></div>
<div class="t" style="left:597.00px;top:522.73px;font-size:23px;line-height:23px;font-weight:400;color:#24663b;font-family:'Liberation Sans', sans-serif;">latest</div>
<div class="r" style="left:676px;top:519px;width:179px;height:29px;background:#cbe2f9;border-radius:15px;"></div>
<div class="t" style="left:690.00px;top:522.73px;font-size:23px;line-height:23px;font-weight:400;color:#0b5cad;font-family:'Liberation Sans', sans-serif;">merge request</div>
<svg class="r" style="left:531.5px;top:616px;" width="30" height="30" viewBox="0 0 30 30" fill="none"><circle cx="15" cy="14.5" r="5" stroke="#333238" stroke-width="2.8"/><path d="M1.5 14.5H10M20 14.5h8.5" stroke="#333238" stroke-width="2.8" stroke-linecap="round"/></svg>
<div class="t" style="left:582.00px;top:622.26px;font-size:24.2px;line-height:24.2px;font-weight:400;color:#2f6ec4;font-family:'Liberation Mono', monospace;">a27f9917</div>
<svg class="r" style="left:705px;top:610px;" width="45" height="45" viewBox="0 0 45 45" fill="none"><path d="M16.4 33.1H15a1.9 1.9 0 0 1-1.9-1.9V13.7H16.4M24.9 13.7H28.4V21.5M20.5 29.5V27a1.9 1.9 0 0 1 1.9-1.9h2.2M27.6 25.1h2.2a1.9 1.9 0 0 1 1.9 1.9v2.5M20.5 32.5v1.7a1.9 1.9 0 0 0 1.9 1.9h2.2M27.6 36.1h2.2a1.9 1.9 0 0 0 1.9-1.9v-1.7" stroke="#4f4e54" stroke-width="2.7" stroke-linecap="butt" stroke-linejoin="round"/><path fill-rule="evenodd" fill="#4f4e54" d="M15.9 17.9V13.7a4.6 4.6 0 0 1 9.2 0V17.9Z M22.2 13.6a1.7 1.7 0 1 0-3.4 0 1.7 1.7 0 1 0 3.4 0Z"/></svg>
<svg class="r" style="left:530px;top:717px;" width="32" height="32" viewBox="0 0 32 32" fill="none"><circle cx="7.8" cy="7.2" r="3.1" stroke="#333238" stroke-width="2.7" stroke-linecap="round" stroke-linejoin="round"/><circle cx="7.8" cy="23.8" r="3.1" stroke="#333238" stroke-width="2.7" stroke-linecap="round" stroke-linejoin="round"/><circle cx="24.1" cy="23.8" r="3.1" stroke="#333238" stroke-width="2.7" stroke-linecap="round" stroke-linejoin="round"/><path d="M7.8 10.3v10.4M24.1 20.7V11.6a4.4 4.4 0 0 0-4.4-4.4h-4.6" stroke="#333238" stroke-width="2.7" stroke-linecap="round" stroke-linejoin="round"/><path d="M19.6 3.4 15.4 7.2l4.2 3.9" stroke="#333238" stroke-width="2.7" stroke-linecap="round" stroke-linejoin="round"/></svg>
<div class="t" style="left:582.50px;top:720.15px;font-size:26.4px;line-height:26.4px;font-weight:400;color:#333238;font-family:'Liberation Sans', sans-serif;">1 related merge request: </div>
<div class="t" style="left:875.00px;top:720.15px;font-size:26.4px;line-height:26.4px;font-weight:400;color:#2f6ec4;font-family:'Liberation Sans', sans-serif;">!1 Initial Deployment of Nexus Fabric Configurations</div>
<div class="t" style="left:516.50px;top:844.84px;font-size:25px;line-height:25px;font-weight:700;color:#333238;font-family:'Liberation Sans', sans-serif;letter-spacing:0.28px;">Pipeline</div>
<div class="t" style="left:656.50px;top:844.33px;font-size:25.6px;line-height:25.6px;font-weight:400;color:#333238;font-family:'Liberation Sans', sans-serif;letter-spacing:0.4px;">Needs</div>
<div class="t" style="left:777.50px;top:844.16px;font-size:25.8px;line-height:25.8px;font-weight:400;color:#333238;font-family:'Liberation Sans', sans-serif;letter-spacing:0.9px;">Jobs</div>
<div class="r" style="left:841.5px;top:841px;width:41px;height:29px;background:#ececef;border-radius:15px;"></div>
<div class="t" style="left:855.50px;top:845.13px;font-size:23px;line-height:23px;font-weight:400;color:#535158;font-family:'Liberation Sans', sans-serif;">3</div>
<div class="t" style="left:926.50px;top:844.16px;font-size:25.8px;line-height:25.8px;font-weight:400;color:#333238;font-family:'Liberation Sans', sans-serif;letter-spacing:0.7px;">Tests</div>
<div class="r" style="left:997px;top:841px;width:43px;height:29px;background:#ececef;border-radius:15px;"></div>
<div class="t" style="left:1011.50px;top:845.13px;font-size:23px;line-height:23px;font-weight:400;color:#535158;font-family:'Liberation Sans', sans-serif;">0</div>
<div class="r" style="left:495px;top:899px;width:2500px;height:1px;background:#d9d9dd;"></div>
<div class="r" style="left:495px;top:895px;width:141px;height:4.5px;background:#6666c4;"></div>
<div class="t" style="left:494.00px;top:953.62px;font-size:24.9px;line-height:24.9px;font-weight:700;color:#333238;font-family:'Liberation Sans', sans-serif;letter-spacing:0.17px;">Group jobs by</div>
<div class="r" style="left:687px;top:936px;width:370px;height:58px;background:#fff;border:2px solid #c3c2c7;border-radius:8px;"></div>
<div class="r" style="left:687px;top:936px;width:111px;height:58px;border:4px solid #9d9ca2;border-radius:8px 0 0 8px;"></div>
<div class="t" style="left:708.50px;top:953.20px;font-size:25.4px;line-height:25.4px;font-weight:400;color:#333238;font-family:'Liberation Sans', sans-serif;letter-spacing:0.7px;">Stage</div>
<div class="t" style="left:819.80px;top:952.44px;font-size:26.3px;line-height:26.3px;font-weight:400;color:#333238;font-family:'Liberation Sans', sans-serif;letter-spacing:0.15px;">Job dependencies</div>
<div class="r" style="left:495px;top:1016px;width:2500px;height:658px;background:#f9f9fc;"></div>
<div class="t" style="left:554.00px;top:1065.61px;font-size:25.5px;line-height:25.5px;font-weight:700;color:#333238;font-family:'Liberation Sans', sans-serif;letter-spacing:0.15px;">validate</div>
<div class="t" style="left:922.00px;top:1065.61px;font-size:25.5px;line-height:25.5px;font-weight:700;color:#333238;font-family:'Liberation Sans', sans-serif;letter-spacing:0.6px;">plan</div>
<div class="t" style="left:1250.00px;top:1065.61px;font-size:25.5px;line-height:25.5px;font-weight:700;color:#333238;font-family:'Liberation Sans', sans-serif;letter-spacing:0.2px;">deploy</div>
<div class="r" style="left:538px;top:1140px;width:282px;height:74px;background:#fff;border:1px solid #d6d6da;border-radius:37px;"></div>
<svg class="r" style="left:553.5px;top:1155px;" width="43" height="43" viewBox="0 0 43 43" fill="none"><circle cx="21.5" cy="21.7" r="20.1" stroke="#30834d" stroke-width="2.9"/><path d="M13.6 20.9l6 5.9 10.1-10.3" stroke="#30834d" stroke-width="4" stroke-linecap="butt" stroke-linejoin="miter"/></svg>
<div class="t" style="left:612.50px;top:1164.59px;font-size:26px;line-height:26px;font-weight:400;color:#333238;font-family:'Liberation Sans', sans-serif;letter-spacing:0px;">validate</div>
<div class="r" style="left:753.0px;top:1150px;width:55px;height:55px;background:#fff;border:2px solid #bdbcc2;border-radius:50%;"></div>
<svg class="r" style="left:765.0px;top:1162px;" width="30" height="30" viewBox="0 0 30 30" fill="none"><path d="M2 12.8A13 13 0 0 1 26.3 8.3M28 18A13 13 0 0 1 3.6 21.6" stroke="#6f6e75" stroke-width="2.8" stroke-linecap="round"/><path d="M28.4 2.6V11.5H20.6M1.6 27.4V19.9H9.4" stroke="#6f6e75" stroke-width="2.8" stroke-linecap="butt" stroke-linejoin="miter"/></svg>
<div class="r" style="left:908px;top:1140px;width:240px;height:74px;background:#fff;border:1px solid #d6d6da;border-radius:37px;"></div>
<svg class="r" style="left:923.5px;top:1155px;" width="43" height="43" viewBox="0 0 43 43" fill="none"><circle cx="21.5" cy="21.7" r="20.1" stroke="#30834d" stroke-width="2.9"/><path d="M13.6 20.9l6 5.9 10.1-10.3" stroke="#30834d" stroke-width="4" stroke-linecap="butt" stroke-linejoin="miter"/></svg>
<div class="t" style="left:981.00px;top:1164.59px;font-size:26px;line-height:26px;font-weight:400;color:#333238;font-family:'Liberation Sans', sans-serif;letter-spacing:0.6px;">plan</div>
<div class="r" style="left:1081.0px;top:1150px;width:55px;height:55px;background:#fff;border:2px solid #bdbcc2;border-radius:50%;"></div>
<svg class="r" style="left:1093.0px;top:1162px;" width="30" height="30" viewBox="0 0 30 30" fill="none"><path d="M2 12.8A13 13 0 0 1 26.3 8.3M28 18A13 13 0 0 1 3.6 21.6" stroke="#6f6e75" stroke-width="2.8" stroke-linecap="round"/><path d="M28.4 2.6V11.5H20.6M1.6 27.4V19.9H9.4" stroke="#6f6e75" stroke-width="2.8" stroke-linecap="butt" stroke-linejoin="miter"/></svg>
<div class="r" style="left:1236px;top:1140px;width:270px;height:74px;background:#fff;border:1px solid #d6d6da;border-radius:37px;"></div>
<svg class="r" style="left:1251.5px;top:1155px;" width="43" height="43" viewBox="0 0 43 43" fill="none"><circle cx="21.5" cy="21.7" r="20.1" stroke="#30834d" stroke-width="2.9"/><path d="M13.6 20.9l6 5.9 10.1-10.3" stroke="#30834d" stroke-width="4" stroke-linecap="butt" stroke-linejoin="miter"/></svg>
<div class="t" style="left:1310.50px;top:1164.59px;font-size:26px;line-height:26px;font-weight:400;color:#333238;font-family:'Liberation Sans', sans-serif;letter-spacing:0.3px;">deploy</div>
<div class="r" style="left:1439.0px;top:1150px;width:55px;height:55px;background:#fff;border:2px solid #bdbcc2;border-radius:50%;"></div>
<svg class="r" style="left:1451.0px;top:1162px;" width="30" height="30" viewBox="0 0 30 30" fill="none"><path d="M2 12.8A13 13 0 0 1 26.3 8.3M28 18A13 13 0 0 1 3.6 21.6" stroke="#6f6e75" stroke-width="2.8" stroke-linecap="round"/><path d="M28.4 2.6V11.5H20.6M1.6 27.4V19.9H9.4" stroke="#6f6e75" stroke-width="2.8" stroke-linecap="butt" stroke-linejoin="miter"/></svg>
<svg class="r" style="left:420px;top:1000px;" width="160" height="200" viewBox="0 0 160 200" fill="none">
<circle cx="62" cy="69" r="44" stroke="#e5432a" stroke-width="5"/>
<path d="M66.5 113c-1 30 5 48 30 60" stroke="#e5432a" stroke-width="6" stroke-linecap="round" fill="none"/>
<path d="M121.5 176 97.5 160.5 94.5 185Z" fill="#e5432a"/>
</svg>
<svg class="r" style="left:460px;top:1040px;" width="30" height="50" viewBox="0 0 30 50" fill="none"><path d="M22.45 8.4V44.7H17.05V14.3L9 18.2V13.1L17.5 8.4Z" fill="#e5432a"/></svg>
<svg class="r" style="left:0px;top:1620px;" width="60" height="54" viewBox="0 1620 60 54" fill="none"><path d="M0 1638 L0.00 1640.00 L0.03 1642.82 L0.12 1644.80 L0.27 1646.55 L0.47 1648.16 L0.74 1649.67 L1.07 1651.10 L1.45 1652.47 L1.89 1653.78 L2.39 1655.03 L2.95 1656.24 L3.57 1657.40 L4.25 1658.52 L4.98 1659.60 L5.77 1660.64 L6.62 1661.63 L7.52 1662.59 L8.48 1663.51 L9.50 1664.39 L10.57 1665.24 L11.70 1666.04 L12.89 1666.81 L14.13 1667.54 L15.42 1668.23 L16.78 1668.89 L18.19 1669.50 L19.65 1670.08 L21.18 1670.61 L22.76 1671.11 L24.41 1671.57 L26.12 1671.99 L27.89 1672.37 L29.74 1672.71 L31.66 1673.01 L33.67 1673.28 L35.78 1673.50 L38.00 1673.68 L40.37 1673.82 L42.94 1673.92 L45.86 1673.98 L50.00 1674.00 L0 1674Z" fill="#2b3b37"/><path d="M0.00 1640.00 L0.03 1642.82 L0.12 1644.80 L0.27 1646.55 L0.47 1648.16 L0.74 1649.67 L1.07 1651.10 L1.45 1652.47 L1.89 1653.78 L2.39 1655.03 L2.95 1656.24 L3.57 1657.40 L4.25 1658.52 L4.98 1659.60 L5.77 1660.64 L6.62 1661.63 L7.52 1662.59 L8.48 1663.51 L9.50 1664.39 L10.57 1665.24 L11.70 1666.04 L12.89 1666.81 L14.13 1667.54 L15.42 1668.23 L16.78 1668.89 L18.19 1669.50 L19.65 1670.08 L21.18 1670.61 L22.76 1671.11 L24.41 1671.57 L26.12 1671.99 L27.89 1672.37 L29.74 1672.71 L31.66 1673.01 L33.67 1673.28 L35.78 1673.50 L38.00 1673.68 L40.37 1673.82 L42.94 1673.92 L45.86 1673.98 L50.00 1674.00" stroke="#8c8f8e" stroke-width="1.6"/></svg>
<svg class="r" style="left:2964px;top:1620px;" width="60" height="54" viewBox="2964 1620 60 54" fill="none"><path d="M3024 1638 L3024.00 1640.00 L3023.97 1642.82 L3023.88 1644.80 L3023.73 1646.55 L3023.53 1648.16 L3023.26 1649.67 L3022.93 1651.10 L3022.55 1652.47 L3022.11 1653.78 L3021.61 1655.03 L3021.05 1656.24 L3020.43 1657.40 L3019.75 1658.52 L3019.02 1659.60 L3018.23 1660.64 L3017.38 1661.63 L3016.48 1662.59 L3015.52 1663.51 L3014.50 1664.39 L3013.43 1665.24 L3012.30 1666.04 L3011.11 1666.81 L3009.87 1667.54 L3008.58 1668.23 L3007.22 1668.89 L3005.81 1669.50 L3004.35 1670.08 L3002.82 1670.61 L3001.24 1671.11 L2999.59 1671.57 L2997.88 1671.99 L2996.11 1672.37 L2994.26 1672.71 L2992.34 1673.01 L2990.33 1673.28 L2988.22 1673.50 L2986.00 1673.68 L2983.63 1673.82 L2981.06 1673.92 L2978.14 1673.98 L2974.00 1674.00 L3024 1674Z" fill="#1c1e1e"/><path d="M3024.00 1640.00 L3023.97 1642.82 L3023.88 1644.80 L3023.73 1646.55 L3023.53 1648.16 L3023.26 1649.67 L3022.93 1651.10 L3022.55 1652.47 L3022.11 1653.78 L3021.61 1655.03 L3021.05 1656.24 L3020.43 1657.40 L3019.75 1658.52 L3019.02 1659.60 L3018.23 1660.64 L3017.38 1661.63 L3016.48 1662.59 L3015.52 1663.51 L3014.50 1664.39 L3013.43 1665.24 L3012.30 1666.04 L3011.11 1666.81 L3009.87 1667.54 L3008.58 1668.23 L3007.22 1668.89 L3005.81 1669.50 L3004.35 1670.08 L3002.82 1670.61 L3001.24 1671.11 L2999.59 1671.57 L2997.88 1671.99 L2996.11 1672.37 L2994.26 1672.71 L2992.34 1673.01 L2990.33 1673.28 L2988.22 1673.50 L2986.00 1673.68 L2983.63 1673.82 L2981.06 1673.92 L2978.14 1673.98 L2974.00 1674.00" stroke="#8c8f8e" stroke-width="1.6"/></svg>
</body></html>
